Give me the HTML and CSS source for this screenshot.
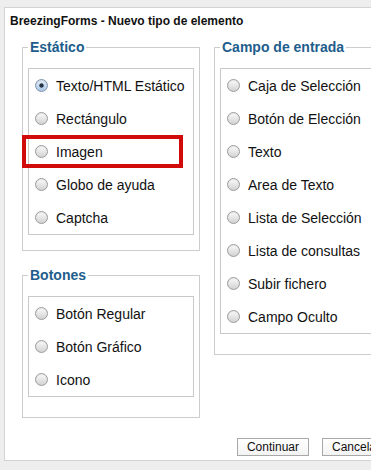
FILE: index.html
```html
<!DOCTYPE html>
<html lang="es">
<head>
    <meta charset="UTF-8">
    <meta name="viewport" content="width=device-width, initial-scale=1.0">
    <title>BreezingForms - Nuevo tipo de elemento</title>
    <link rel="stylesheet" href="styles.css">
</head>
<body>
    <div class="dialog">
        <div class="dialog-title">BreezingForms - Nuevo tipo de elemento</div>

        <div class="columns">
            <div class="column">
                <fieldset class="group group-static">
                    <legend>Estático</legend>
                    <div class="options">
                        <label class="option"><input type="radio" name="element" checked><span>Texto/HTML Estático</span></label>
                        <label class="option"><input type="radio" name="element"><span>Rectángulo</span></label>
                        <label class="option marked"><input type="radio" name="element"><span>Imagen</span><span class="mark"></span></label>
                        <label class="option"><input type="radio" name="element"><span>Globo de ayuda</span></label>
                        <label class="option"><input type="radio" name="element"><span>Captcha</span></label>
                    </div>
                </fieldset>

                <fieldset class="group">
                    <legend>Botones</legend>
                    <div class="options">
                        <label class="option"><input type="radio" name="element"><span>Botón Regular</span></label>
                        <label class="option"><input type="radio" name="element"><span>Botón Gráfico</span></label>
                        <label class="option"><input type="radio" name="element"><span>Icono</span></label>
                    </div>
                </fieldset>
            </div>

            <div class="column">
                <fieldset class="group">
                    <legend>Campo de entrada</legend>
                    <div class="options">
                        <label class="option"><input type="radio" name="element"><span>Caja de Selección</span></label>
                        <label class="option"><input type="radio" name="element"><span>Botón de Elección</span></label>
                        <label class="option"><input type="radio" name="element"><span>Texto</span></label>
                        <label class="option"><input type="radio" name="element"><span>Area de Texto</span></label>
                        <label class="option"><input type="radio" name="element"><span>Lista de Selección</span></label>
                        <label class="option"><input type="radio" name="element"><span>Lista de consultas</span></label>
                        <label class="option"><input type="radio" name="element"><span>Subir fichero</span></label>
                        <label class="option"><input type="radio" name="element"><span>Campo Oculto</span></label>
                    </div>
                </fieldset>
            </div>
        </div>

        <div class="dialog-footer">
            <button class="btn">Continuar</button>
            <button class="btn">Cancelar</button>
        </div>
    </div>
</body>
</html>
```

FILE: styles.css
```css
body {
    margin: 0;
    height: 470px;
    overflow: hidden;
    background: #eeeeee;
    font-family: "Liberation Sans", Arial, sans-serif;
    color: #111;
}

.dialog {
    box-sizing: border-box;
    width: 400px;
    margin: 7px 0 0 4px;
    padding: 0 0 4px;
    background: #fff;
    border: 1px solid #d3d3d3;
}

.dialog-title {
    padding: 6px 5px 0;
    font-size: 12px;
    line-height: 14px;
    font-weight: bold;
}

.columns {
    display: flex;
    align-items: flex-start;
    gap: 14px;
    margin-top: 11px;
    padding-left: 17px;
}

.column {
    width: 178px;
    display: flex;
    flex-direction: column;
    gap: 16px;
}

.group {
    margin: 0;
    min-width: 0;
    padding: 13px 5px 20px;
    border: 1px solid #cdcdcd;
}

.group-static {
    padding-bottom: 15px;
}

.group legend {
    padding: 0 2px;
    font-size: 14px;
    line-height: 16px;
    font-weight: bold;
    color: #215d8c;
}

.options {
    border: 1px solid #c9c9c9;
    background: #fff;
}

.option {
    position: relative;
    display: flex;
    align-items: center;
    height: 33px;
    font-size: 14px;
    white-space: nowrap;
}

.option input {
    appearance: none;
    -webkit-appearance: none;
    box-sizing: border-box;
    width: 13px;
    height: 13px;
    margin: 0 8px 0 6px;
    border: 1px solid #9c9c9c;
    border-radius: 50%;
    background: linear-gradient(#fbfbfb, #d2d2d2);
    box-shadow: inset 0 1px 1px rgba(0, 0, 0, 0.08);
}

.option input:checked {
    border-color: #7f95ad;
    background:
        radial-gradient(circle, #253445 0 1.8px, transparent 2.5px),
        linear-gradient(#e4eef9, #a9c4e4);
}

/* red annotation frame drawn over the "Imagen" row */
.mark {
    position: absolute;
    top: 0;
    left: -7px;
    box-sizing: border-box;
    width: 161px;
    height: 33px;
    border: 4px solid #d10a0a;
}

.dialog-footer {
    display: flex;
    justify-content: flex-end;
    gap: 13px;
    margin-top: 20px;
    padding-right: 13px;
}

.btn {
    height: 18px;
    padding: 0 9px;
    font-family: "Liberation Sans", Arial, sans-serif;
    font-size: 12px;
    color: #111;
    background: linear-gradient(#ffffff, #f3f3f3);
    border: 1px solid #a8a8a8;
    border-radius: 0;
}
```
